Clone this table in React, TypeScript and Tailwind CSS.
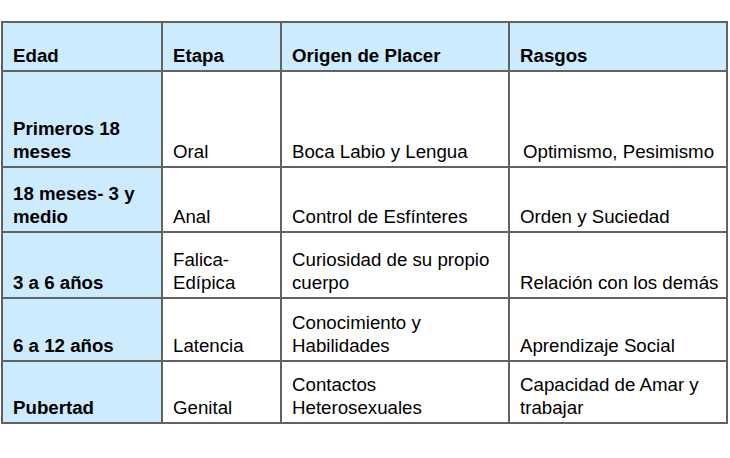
import React from "react";

const rows: { h: string; cells: React.ReactNode[] }[] = [
  { h: "h-[96px]", cells: [<>Primeros 18<br />meses</>, "Oral", "Boca Labio y Lengua", <span className="ml-[3px]">Optimismo, Pesimismo</span>] },
  { h: "h-[65px]", cells: [<>18 meses- 3 y<br />medio</>, "Anal", "Control de Esfínteres", "Orden y Suciedad"] },
  { h: "h-[66px]", cells: ["3 a 6 años", <>Falica-<br />Edípica</>, <>Curiosidad de su propio<br />cuerpo</>, "Relación con los demás"] },
  { h: "h-[63px]", cells: ["6 a 12 años", "Latencia", <>Conocimiento y<br />Habilidades</>, "Aprendizaje Social"] },
  { h: "h-[62px]", cells: ["Pubertad", "Genital", <>Contactos<br />Heterosexuales</>, <>Capacidad de Amar y<br />trabajar</>] },
];

const header = ["Edad", "Etapa", "Origen de Placer", "Rasgos"];

export default function App() {
  return (
    <div className="w-[730px] h-[458px] bg-white overflow-hidden" style={{ fontFamily: '"Liberation Sans", Arial, sans-serif' }}>
      <div className="ml-[1px] mt-[21px] w-[727px] border-l-2 border-t-2 border-[#626262] grid grid-cols-[160px_119px_228px_218px] text-[18.7px] leading-[23px] text-black">
        {header.map((t, i) => (
          <div key={i} className="h-[49px] bg-[#cdebff] border-r-2 border-b-2 border-[#626262] flex items-end pl-[10px] pb-[3px] font-bold">
            <div>{t}</div>
          </div>
        ))}
        {rows.map((r, ri) =>
          r.cells.map((c, ci) => (
            <div
              key={`${ri}-${ci}`}
              className={`${r.h} border-r-2 border-b-2 border-[#626262] flex items-end pl-[10px] pb-[3px] whitespace-nowrap ${ci === 0 ? "bg-[#cdebff] font-bold" : "bg-white"}`}
            >
              <div>{c}</div>
            </div>
          ))
        )}
      </div>
    </div>
  );
}
